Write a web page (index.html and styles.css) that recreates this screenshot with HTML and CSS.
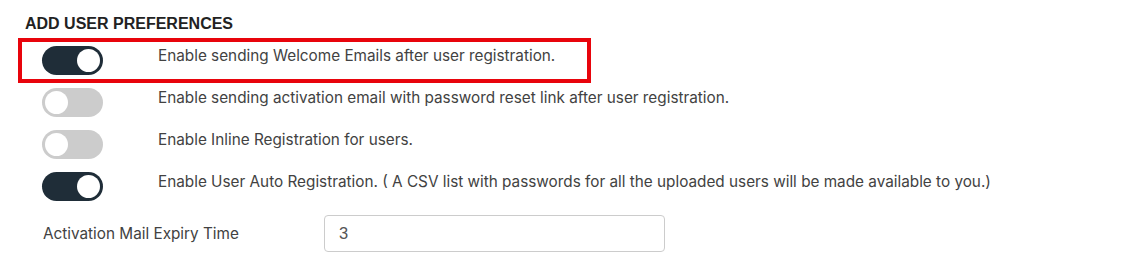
FILE: index.html
```html
<!DOCTYPE html>
<html lang="en">
<head>
    <meta charset="UTF-8">
    <title>User Preferences</title>
    <link rel="stylesheet" href="styles.css">
</head>
<body>
    <div class="prefs">
        <h3 class="prefs-title">ADD USER PREFERENCES</h3>
        <div class="pref-list">
            <div class="pref-row highlight">
                <label class="switch">
                    <input type="checkbox" checked>
                    <span class="slider"></span>
                </label>
                <span class="pref-text">Enable sending Welcome Emails after user registration.</span>
            </div>
            <div class="pref-row">
                <label class="switch">
                    <input type="checkbox">
                    <span class="slider"></span>
                </label>
                <span class="pref-text">Enable sending activation email with password reset link after user registration.</span>
            </div>
            <div class="pref-row">
                <label class="switch">
                    <input type="checkbox">
                    <span class="slider"></span>
                </label>
                <span class="pref-text">Enable Inline Registration for users.</span>
            </div>
            <div class="pref-row">
                <label class="switch">
                    <input type="checkbox" checked>
                    <span class="slider"></span>
                </label>
                <span class="pref-text">Enable User Auto Registration. ( A CSV list with passwords for all the uploaded users will be made available to you.)</span>
            </div>
        </div>
        <div class="expiry-row">
            <label class="expiry-label" for="expiry">Activation Mail Expiry Time</label>
            <input id="expiry" class="expiry-input" type="text" value="3">
        </div>
    </div>
</body>
</html>
```

FILE: styles.css
```css
body {
    margin: 0;
    background: #fff;
    font-family: Inter, Roboto, 'Liberation Sans', sans-serif;
    color: #424242;
}
.prefs {
    padding: 15px 0 0 22px;
}
.prefs-title {
    margin: 0 0 9px 3px;
    font-family: 'Liberation Sans', Arial, sans-serif;
    font-size: 16px;
    line-height: 18px;
    font-weight: bold;
    color: #222;
}
.pref-list {
    display: flex;
    flex-direction: column;
    align-items: flex-start;
    gap: 5px;
}
.pref-row {
    display: flex;
    align-items: flex-start;
    padding: 4px 32px 4px 20px;
}
.pref-row.highlight {
    outline: 4px solid #e8040c;
}
.switch {
    flex: 0 0 auto;
    width: 116px;
    cursor: pointer;
}
.switch input {
    display: none;
}
.slider {
    display: flex;
    align-items: center;
    justify-content: flex-start;
    width: 61px;
    height: 29px;
    border-radius: 15px;
    background: #cccccc;
    transition: background 0.2s ease;
}
.slider::before {
    content: "";
    width: 23px;
    height: 23px;
    margin: 0 3px;
    border-radius: 50%;
    background: #fff;
}
.switch input:checked + .slider {
    justify-content: flex-end;
    background: #1f2d38;
}
.pref-text {
    font-size: 15.3px;
    line-height: 20px;
}
.expiry-row {
    display: flex;
    align-items: center;
    margin-top: 10px;
    padding-left: 21px;
}
.expiry-label {
    width: 281px;
    font-size: 15.3px;
}
.expiry-input {
    box-sizing: border-box;
    width: 341px;
    height: 37px;
    padding: 0 14px;
    border: 1px solid #ccc;
    border-radius: 4px;
    font-family: 'Liberation Sans', Arial, sans-serif;
    font-size: 16.5px;
    color: #555;
}
```
